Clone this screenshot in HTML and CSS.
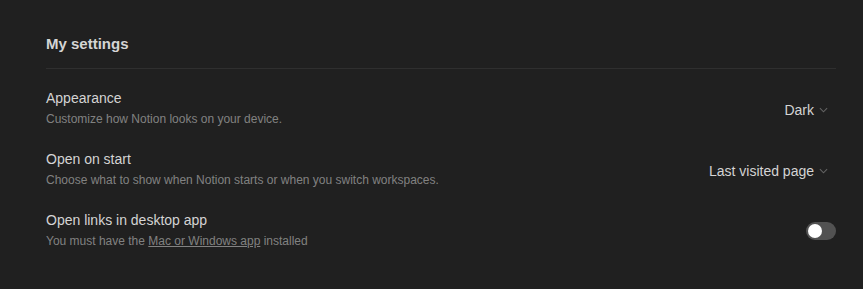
FILE: index.html
```html
<!DOCTYPE html>
<html lang="en">
<head>
    <meta charset="UTF-8">
    <title>My settings</title>
    <link rel="stylesheet" href="styles.css">
</head>
<body>
    <div class="settings">
        <h2 class="settings-title">My settings</h2>
        <div class="divider"></div>

        <div class="setting-row">
            <div class="setting-info">
                <div class="setting-name">Appearance</div>
                <div class="setting-desc">Customize how Notion looks on your device.</div>
            </div>
            <div class="select">
                Dark
                <svg class="chevron" viewBox="0 0 10 6"><polyline points="1,1 5,5 9,1"></polyline></svg>
            </div>
        </div>

        <div class="setting-row">
            <div class="setting-info">
                <div class="setting-name">Open on start</div>
                <div class="setting-desc">Choose what to show when Notion starts or when you switch workspaces.</div>
            </div>
            <div class="select">
                Last visited page
                <svg class="chevron" viewBox="0 0 10 6"><polyline points="1,1 5,5 9,1"></polyline></svg>
            </div>
        </div>

        <div class="setting-row">
            <div class="setting-info">
                <div class="setting-name">Open links in desktop app</div>
                <div class="setting-desc">You must have the <a href="#" class="desc-link">Mac or Windows app</a> installed</div>
            </div>
            <div class="toggle">
                <div class="toggle-knob"></div>
            </div>
        </div>
    </div>
</body>
</html>
```

FILE: styles.css
```css
body {
    margin: 0;
    background: #202020;
    font-family: "Liberation Sans", Arial, sans-serif;
    color: rgba(255, 255, 255, 0.81);
}
.settings {
    padding: 32px 27px 0 46px;
}
.settings-title {
    margin: 0;
    font-size: 15px;
    font-weight: 700;
    line-height: 24px;
    color: rgba(255, 255, 255, 0.81);
}
.divider {
    height: 1px;
    background: #2f2f2f;
    margin: 12px 0 19px;
}
.setting-row {
    display: flex;
    align-items: center;
    justify-content: space-between;
    margin-bottom: 22px;
}
.setting-name {
    font-size: 14px;
    line-height: 20px;
}
.setting-desc {
    font-size: 12px;
    line-height: 16px;
    margin-top: 3px;
    color: rgba(255, 255, 255, 0.443);
}
.desc-link {
    color: inherit;
    text-decoration: underline;
}
.select {
    display: flex;
    align-items: center;
    padding: 4px 8px 0 0;
    font-size: 14px;
    color: rgba(255, 255, 255, 0.81);
}
.chevron {
    width: 9px;
    height: 6px;
    margin-left: 5px;
    fill: none;
    stroke: rgba(255, 255, 255, 0.3);
    stroke-width: 1.2;
}
.toggle {
    width: 30px;
    height: 18px;
    margin-top: 2px;
    border-radius: 9px;
    background: #525252;
    display: flex;
    align-items: center;
    padding: 0 2px;
    box-sizing: border-box;
}
.toggle-knob {
    width: 14px;
    height: 14px;
    border-radius: 50%;
    background: #fff;
}
```
